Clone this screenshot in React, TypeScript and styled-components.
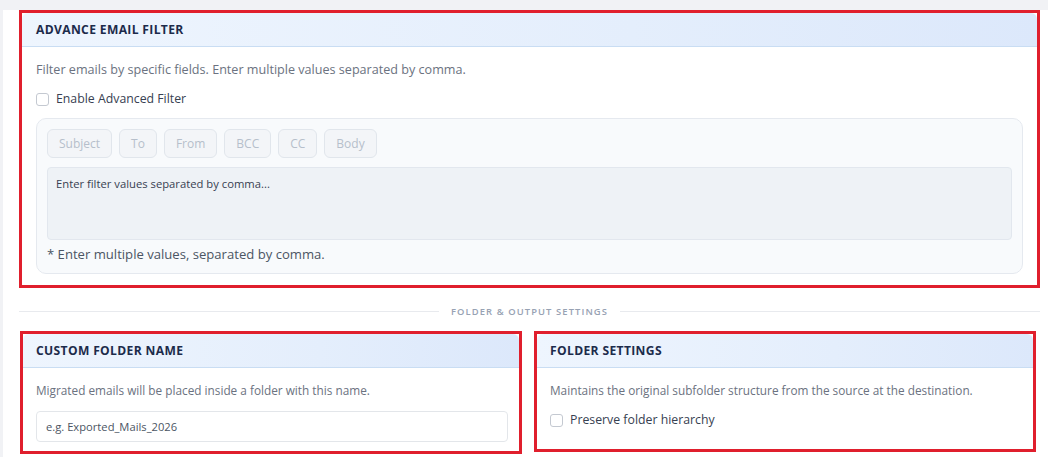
import React from "react";
import styled, { createGlobalStyle } from "styled-components";

const GlobalStyle = createGlobalStyle`
  html, body {
    margin: 0;
    padding: 0;
    background: #f1f2f5;
    font-family: "Open Sans", "Noto Sans", sans-serif;
  }
  * {
    box-sizing: border-box;
  }
`;

const Page = styled.div`
  padding: 10px 0 0 3px;
  width: 1048px;
  height: 457px;
  overflow: hidden;
`;

const Panel = styled.div`
  background: #ffffff;
  padding: 0 8px 3px 16px;
  display: flex;
  flex-direction: column;
`;

// red outline drawn round each settings card
const Highlight = styled.div`
  border: 3px solid #e01f2d;
  display: flex;
`;

const Card = styled.section`
  flex: 1;
  display: flex;
  flex-direction: column;
  border-radius: 6px;
  overflow: hidden;
  background: #fff;
`;

const CardHeader = styled.header<{ $inset?: number }>`
  height: 34px;
  display: flex;
  align-items: center;
  padding: 0 ${(p) => p.$inset ?? 14}px 1px;
  background: linear-gradient(90deg, #eef5fe 0%, #e4eefc 60%, #dce8fb 100%);
  border-bottom: 1px solid #c9ddf3;
  h3 {
    margin: 0;
    font-size: 12.1px;
    font-weight: 700;
    letter-spacing: 0.35px;
    color: #1c2b4b;
  }
`;

const CardBody = styled.div<{ $inset?: number; $right?: number; $bottom?: number }>`
  display: flex;
  flex-direction: column;
  padding: 14px ${(p) => p.$right ?? p.$inset ?? 14}px ${(p) => p.$bottom ?? 12}px
    ${(p) => p.$inset ?? 14}px;
`;

const Hint = styled.p<{ $size?: number }>`
  margin: 0;
  font-size: ${(p) => p.$size ?? 11.8}px;
  color: #6b7280;
  line-height: 17px;
`;

const CheckRow = styled.label<{ $top?: number }>`
  display: flex;
  align-items: center;
  gap: 7px;
  margin-top: ${(p) => p.$top ?? 13}px;
  font-size: 12.3px;
  color: #374151;
  line-height: 16px;
  input {
    appearance: none;
    margin: 0;
    width: 13px;
    height: 13px;
    border: 1px solid #c4c9d1;
    border-radius: 3px;
    background: #fff;
  }
`;

const FilterBox = styled.div`
  margin-top: 11px;
  background: #f8fafc;
  border: 1px solid #e5e9ef;
  border-radius: 10px;
  padding: 10px;
  display: flex;
  flex-direction: column;
`;

const ChipRow = styled.div`
  display: flex;
  gap: 7px;
`;

const Chip = styled.button`
  height: 29px;
  padding: 0 11px;
  border: 1px solid #e1e6ec;
  border-radius: 6px;
  background: #f3f5f8;
  color: #b6bfcb;
  font-family: inherit;
  font-size: 12px;
  cursor: default;
`;

const ValuesArea = styled.textarea`
  margin-top: 9px;
  height: 73px;
  resize: none;
  border: 1px solid #e2e7ee;
  border-radius: 4px;
  background: #eef2f6;
  padding: 8px 8px;
  font-family: inherit;
  font-size: 11.25px;
  color: #374151;
  &::placeholder {
    color: #374151;
  }
`;

const Note = styled.div`
  margin-top: 5px;
  font-size: 13.1px;
  color: #4b5563;
  line-height: 18px;
`;

const Divider = styled.div`
  display: flex;
  align-items: center;
  gap: 12px;
  margin: 17px 0 13px;
  &::before,
  &::after {
    content: "";
    flex: 1;
    height: 1px;
    background: #e8eaee;
  }
  span {
    font-size: 9.4px;
    font-weight: 600;
    letter-spacing: 1.1px;
    color: #97a2b3;
  }
`;

const Columns = styled.div`
  display: grid;
  grid-template-columns: 502px 502px;
  align-items: start;
  gap: 12px;
  padding-left: 1px;
`;

const TextInput = styled.input`
  margin-top: 12px;
  height: 31px;
  border: 1px solid #e3e6ea;
  border-radius: 4px;
  padding: 0 9px;
  font-family: inherit;
  font-size: 11.2px;
  color: #4b5563;
  &::placeholder {
    color: #4b5563;
  }
`;

const fields = ["Subject", "To", "From", "BCC", "CC", "Body"];

export default function App() {
  return (
    <>
      <GlobalStyle />
      <Page>
        <Panel>
          <Highlight>
            <Card>
              <CardHeader>
                <h3>ADVANCE EMAIL FILTER</h3>
              </CardHeader>
              <CardBody $bottom={11}>
                <Hint $size={12.6}>
                  Filter emails by specific fields. Enter multiple values separated by comma.
                </Hint>
                <CheckRow>
                  <input type="checkbox" />
                  Enable Advanced Filter
                </CheckRow>
                <FilterBox>
                  <ChipRow>
                    {fields.map((f) => (
                      <Chip key={f}>{f}</Chip>
                    ))}
                  </ChipRow>
                  <ValuesArea placeholder="Enter filter values separated by comma..." />
                  <Note>* Enter multiple values, separated by comma.</Note>
                </FilterBox>
              </CardBody>
            </Card>
          </Highlight>

          <Divider>
            <span>FOLDER &amp; OUTPUT SETTINGS</span>
          </Divider>

          <Columns>
            <Highlight>
              <Card>
                <CardHeader $inset={13}>
                  <h3>CUSTOM FOLDER NAME</h3>
                </CardHeader>
                <CardBody $inset={13} $right={11} $bottom={9}>
                  <Hint>Migrated emails will be placed inside a folder with this name.</Hint>
                  <TextInput placeholder="e.g. Exported_Mails_2026" />
                </CardBody>
              </Card>
            </Highlight>
            <Highlight>
              <Card>
                <CardHeader $inset={13}>
                  <h3>FOLDER SETTINGS</h3>
                </CardHeader>
                <CardBody $inset={13} $bottom={21}>
                  <Hint>Maintains the original subfolder structure from the source at the destination.</Hint>
                  <CheckRow $top={13}>
                    <input type="checkbox" />
                    Preserve folder hierarchy
                  </CheckRow>
                </CardBody>
              </Card>
            </Highlight>
          </Columns>
        </Panel>
      </Page>
    </>
  );
}
